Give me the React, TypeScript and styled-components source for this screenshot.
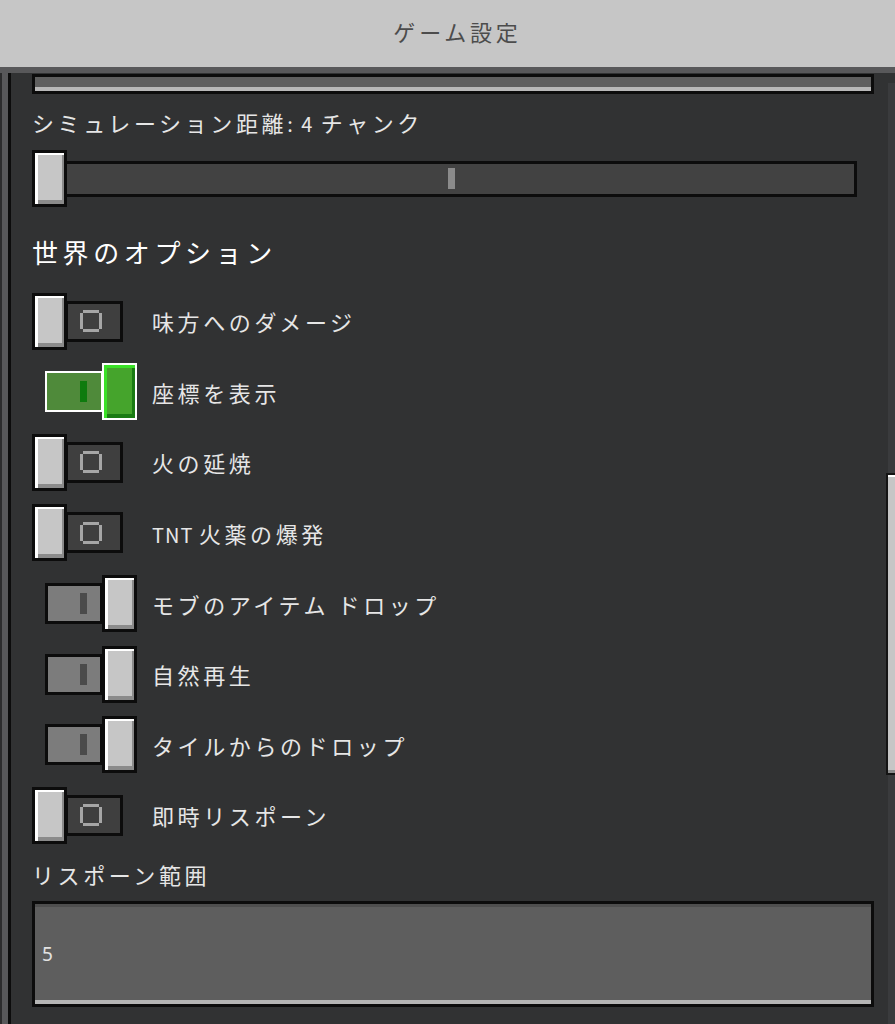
import React from 'react';
import styled, { createGlobalStyle, css } from 'styled-components';

const GlobalStyle = createGlobalStyle`
  html, body {
    margin: 0;
    padding: 0;
    height: 100%;
    overflow: hidden;
    background: #313233;
  }
  body {
    font-family: "Noto Sans CJK JP", "Noto Sans", sans-serif;
    color: #e6e6e6;
  }
`;

const Page = styled.div`
  display: flex;
  flex-direction: column;
  height: 1024px;
`;

const Header = styled.header`
  height: 73px;
  box-sizing: border-box;
  padding: 0 0 5px 20px;
  background: #c6c6c6;
  display: flex;
  align-items: center;
  justify-content: center;
  border-bottom: 6px solid #58585a;
  flex-shrink: 0;
`;

const Title = styled.h1`
  margin: 0;
  font-size: 22px;
  font-weight: 400;
  letter-spacing: 3.8px;
  color: #4c4c4c;
`;

const Body = styled.div`
  flex: 1;
  display: flex;
  overflow: hidden;
`;

const LeftRail = styled.div`
  width: 6px;
  flex-shrink: 0;
  background: #58585a;
  border-left: 2px solid #2c2c2d;
  border-right: 3px solid #0c0c0c;
`;

const Content = styled.main`
  flex: 1;
  display: flex;
  flex-direction: column;
  padding: 0 12px 0 21px;
`;

const ScrollColumn = styled.div`
  width: 9px;
  flex-shrink: 0;
  display: flex;
  flex-direction: column;
  padding-top: 10px;
`;

const ScrollTrack = styled.div`
  flex: 1;
  margin-left: 2px;
  background: #3a3b3d;
  padding-top: 390px;
`;

const ScrollThumb = styled.div`
  margin-left: -2px;
  width: 9px;
  height: 302px;
  box-sizing: border-box;
  border: 2px solid #141414;
  border-right: none;
  background: #c6c6c6;
  box-shadow: inset 0 2px 0 #ffffff, inset 0 -3px 0 #8b8b8b;
`;

const TopBar = styled.div`
  margin-top: 1px;
  height: 20px;
  box-sizing: border-box;
  border: 3px solid #0c0c0c;
  background: #5f5f5f;
  box-shadow: inset 0 -4px 0 #b8b8b8;
`;

const textBase = css`
  font-size: 22px;
  letter-spacing: 3.6px;
  color: #e6e6e6;
  white-space: nowrap;
`;

const FieldLabel = styled.div<{ $gap: number }>`
  ${textBase};
  margin-top: ${p => p.$gap}px;
  line-height: 30px;
`;

const Latin = styled.span<{ $spacing?: number }>`
  font-size: 20px;
  letter-spacing: ${p => p.$spacing ?? 0}px;
`;

const SliderWrap = styled.div`
  position: relative;
  margin-top: 11px;
  margin-right: 17px;
  height: 57px;
  display: flex;
  align-items: center;
`;

const SliderTrack = styled.div`
  flex: 1;
  height: 36px;
  box-sizing: border-box;
  border: 3px solid #0c0c0c;
  background: #424242;
`;

const SliderTick = styled.div<{ $left: number }>`
  position: absolute;
  left: ${p => p.$left}px;
  top: 18px;
  width: 7px;
  height: 21px;
  background: #8b8b8b;
`;

const thumbBase = css`
  position: relative;
  z-index: 1;
  width: 35px;
  height: 57px;
  box-sizing: border-box;
  flex-shrink: 0;
`;

const SliderThumb = styled.div`
  ${thumbBase};
  position: absolute;
  left: 0;
  top: 0;
  border: 3px solid #0c0c0c;
  background: #c6c6c6;
  box-shadow: inset 3px 2px 0 #ffffff, inset -2px -4px 0 #8b8b8b;
`;

const SectionHeading = styled.h2`
  margin: 27px 0 0;
  font-size: 26px;
  line-height: 36px;
  font-weight: 400;
  letter-spacing: 4.6px;
  color: #ffffff;
`;

const OptionList = styled.div`
  margin-top: 16px;
  display: flex;
  flex-direction: column;
`;

const ToggleRow = styled.div`
  height: 70.57px;
  display: flex;
  align-items: center;
`;

const SwitchBox = styled.div<{ $on: boolean }>`
  width: 120px;
  flex-shrink: 0;
  box-sizing: border-box;
  display: flex;
  align-items: center;
  padding-left: ${p => (p.$on ? 13 : 0)}px;
`;

type Tone = 'off' | 'on' | 'green';

const Thumb = styled.div<{ $tone: Tone }>`
  ${thumbBase};
  ${p =>
    p.$tone === 'green'
      ? css`
          margin-left: -1px;
          border: 2px solid #ffffff;
          background: #45a42c;
          box-shadow: inset 3px 3px 0 #3ae127, inset -3px -4px 0 #1a7b13;
        `
      : css`
          margin-left: ${p.$tone === 'on' ? -1 : 0}px;
          border: 3px solid #0c0c0c;
          background: #c6c6c6;
          box-shadow: inset 3px 2px 0 #ffffff, inset -2px -4px 0 #8b8b8b;
        `}
`;

const Track = styled.div<{ $tone: Tone }>`
  width: 58px;
  height: 41px;
  box-sizing: border-box;
  display: flex;
  align-items: center;
  ${p =>
    p.$tone === 'off' &&
    css`
      margin-left: -2px;
      border: 3px solid #0c0c0c;
      background: #3f3f3f;
      padding-left: 12px;
    `}
  ${p =>
    p.$tone === 'on' &&
    css`
      border: 3px solid #0c0c0c;
      background: #7c7c7c;
      justify-content: flex-end;
      padding-right: 13px;
    `}
  ${p =>
    p.$tone === 'green' &&
    css`
      border: 2px solid #ffffff;
      background: #4f8a3a;
      justify-content: flex-end;
      padding-right: 14px;
    `}
`;

const TrackBar = styled.div<{ $green: boolean }>`
  width: 7px;
  height: 21px;
  background: ${p => (p.$green ? '#0e7b0e' : '#4b4b4b')};
`;

const RowLabel = styled.span`
  ${textBase};
`;

const NumberBox = styled.div`
  margin-top: 12px;
  height: 106px;
  box-sizing: border-box;
  border: 3px solid #0c0c0c;
  background: #5e5e5e;
  box-shadow: inset 0 3px 0 #4e4e4e, inset 0 -4px 0 #b5b5b5;
  display: flex;
  align-items: center;
  padding: 0 7px;
`;

const NumberValue = styled.span`
  font-family: "Noto Sans", sans-serif;
  font-size: 19px;
  color: #e2e2e2;
`;

const RingIcon = () => (
  <svg width="22" height="22" viewBox="0 0 22 22">
    <g fill="#a6a6a6">
      <rect x="3" y="0" width="16" height="3" />
      <rect x="3" y="19" width="16" height="3" />
      <rect x="0" y="3" width="3" height="16" />
      <rect x="19" y="3" width="3" height="16" />
    </g>
  </svg>
);

const Toggle: React.FC<{ tone: Tone }> = ({ tone }) => {
  if (tone === 'off') {
    return (
      <SwitchBox $on={false}>
        <Thumb $tone="off" />
        <Track $tone="off">
          <RingIcon />
        </Track>
      </SwitchBox>
    );
  }
  return (
    <SwitchBox $on>
      <Track $tone={tone}>
        <TrackBar $green={tone === 'green'} />
      </Track>
      <Thumb $tone={tone} />
    </SwitchBox>
  );
};

const options: { id: string; label: React.ReactNode; tone: Tone }[] = [
  { id: 'ff', label: '味方へのダメージ', tone: 'off' },
  { id: 'coords', label: '座標を表示', tone: 'green' },
  { id: 'fire', label: '火の延焼', tone: 'off' },
  { id: 'tnt', label: <><Latin $spacing={1}>TNT </Latin>火薬の爆発</>, tone: 'off' },
  { id: 'mobloot', label: 'モブのアイテム ドロップ', tone: 'on' },
  { id: 'regen', label: '自然再生', tone: 'on' },
  { id: 'tiledrop', label: 'タイルからのドロップ', tone: 'on' },
  { id: 'respawn', label: '即時リスポーン', tone: 'off' },
];

export default function App() {
  return (
    <>
      <GlobalStyle />
      <Page>
        <Header>
          <Title>ゲーム設定</Title>
        </Header>
        <Body>
          <LeftRail />
          <Content>
            <TopBar />
            <FieldLabel $gap={13}>
              シミュレーション距離<Latin $spacing={2}>: 4 </Latin>チャンク
            </FieldLabel>
            <SliderWrap>
              <SliderTrack />
              <SliderTick $left={416} />
              <SliderThumb />
            </SliderWrap>
            <SectionHeading>世界のオプション</SectionHeading>
            <OptionList>
              {options.map(o => (
                <ToggleRow key={o.id}>
                  <Toggle tone={o.tone} />
                  <RowLabel>{o.label}</RowLabel>
                </ToggleRow>
              ))}
            </OptionList>
            <FieldLabel $gap={8}>リスポーン範囲</FieldLabel>
            <NumberBox>
              <NumberValue>5</NumberValue>
            </NumberBox>
          </Content>
          <ScrollColumn>
            <ScrollTrack>
              <ScrollThumb />
            </ScrollTrack>
          </ScrollColumn>
        </Body>
      </Page>
    </>
  );
}
